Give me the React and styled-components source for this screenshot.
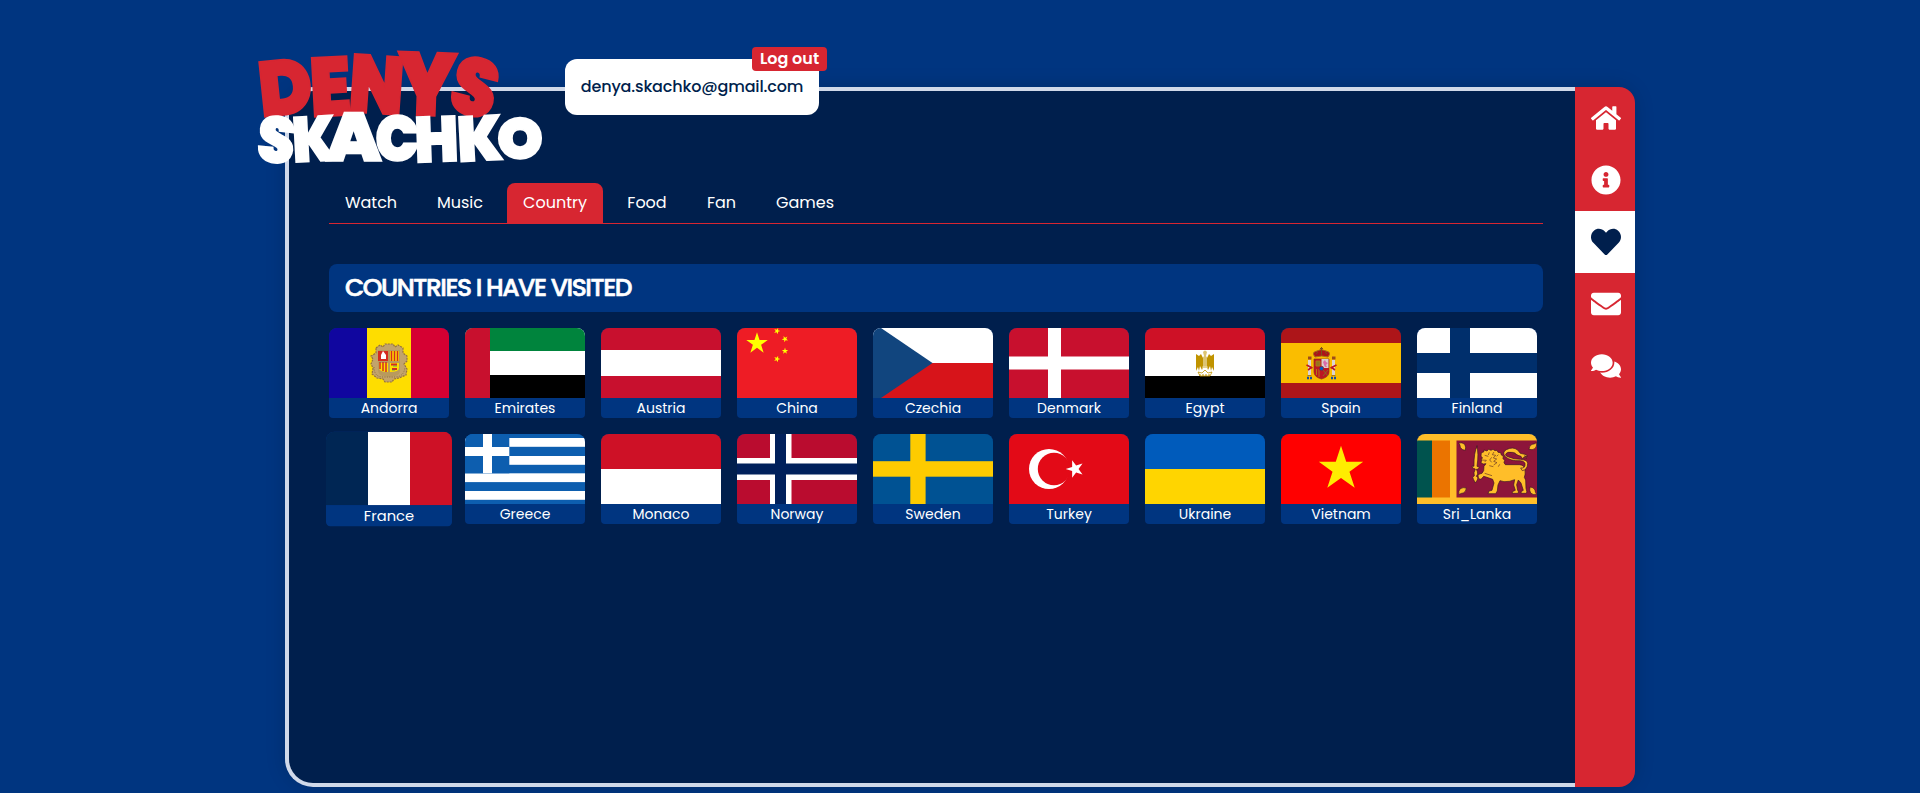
import React from 'react';
import styled, { createGlobalStyle, css } from 'styled-components';
import { FaHome, FaInfoCircle, FaHeart, FaEnvelope, FaComments } from 'react-icons/fa';

const color = {
  page: '#003580',
  panel: '#001f4d',
  red: '#d72631',
  border: '#d0d9ea',
};

const GlobalStyle = createGlobalStyle`
  * { box-sizing: border-box; }
  html, body { margin: 0; padding: 0; }
  body {
    background: ${color.page};
    color: #fff;
    font-family: Poppins, Inter, sans-serif;
    font-size: 16px;
    overflow: hidden;
  }
`;

const Page = styled.div`
  height: 793px;
  padding: 87px 285px 0;
`;

const Window = styled.div`
  position: relative;
  display: flex;
  width: 1350px;
  height: 700px;
  border-radius: 30px 20px 20px 30px;
  box-shadow: 0 0 20px rgba(0, 0, 0, 0.16);
`;

const Panel = styled.main`
  flex: 1;
  padding: 92px 32px 0 40px;
  background: ${color.panel};
  border: 4px solid ${color.border};
  border-right: 0;
  border-radius: 28px 0 0 28px;
`;

const Sidebar = styled.nav`
  width: 60px;
  background: ${color.red};
  border-radius: 0 16px 16px 0;
  overflow: hidden;
`;

const SideLink = styled.a`
  display: flex;
  align-items: center;
  justify-content: center;
  height: 62px;
  padding-left: 2px;
  color: ${(p) => (p.$active ? color.panel : '#fff')};
  background: ${(p) => (p.$active ? '#fff' : 'transparent')};
  svg { width: 30px; height: 30px; }
`;

const Logo = styled.svg`
  position: absolute;
  left: -45px;
  top: -57px;
  width: 320px;
  height: 150px;
  overflow: visible;
  font-family: Poppins, Lato, sans-serif;
  font-weight: 900;
`;

const Account = styled.div`
  position: absolute;
  left: 280px;
  top: -28px;
  display: flex;
  align-items: center;
  justify-content: center;
  width: 254px;
  height: 56px;
  padding-bottom: 1px;
  background: #fff;
  border-radius: 12px;
  color: ${color.panel};
  font-weight: 500;
  white-space: nowrap;
  letter-spacing: -0.15px;
`;

const LogOut = styled.button`
  position: absolute;
  right: -8px;
  top: -12px;
  width: 75px;
  height: 24px;
  padding: 0;
  border: 0;
  border-radius: 4px;
  background: ${color.red};
  color: #fff;
  font: 600 16px/24px Poppins, Inter, sans-serif;
`;

const Tabs = styled.div`
  display: flex;
  gap: 8px;
  height: 41px;
  border-bottom: 1px solid ${color.red};
`;

const Tab = styled.a`
  width: ${(p) => p.$width}px;
  height: 40px;
  line-height: 39px;
  text-align: center;
  border-radius: 8px 8px 0 0;
  ${(p) => p.$active && css`background: ${color.red};`}
`;

const Heading = styled.h1`
  height: 48px;
  margin: 40px 0 16px;
  padding: 0 16px;
  border-radius: 8px;
  background: ${color.page};
  font-size: 25px;
  line-height: 48px;
  font-weight: 500;
  -webkit-text-stroke: 0.6px #fff;
  letter-spacing: -1.46px;
  text-transform: uppercase;
`;

const Grid = styled.div`
  display: grid;
  grid-template-columns: repeat(9, 120px);
  gap: 16px;
`;

const Card = styled.figure`
  height: 90px;
  margin: 0;
  border-radius: 8px 8px 4px 4px;
  background: ${color.page};
  overflow: hidden;
  ${(p) => p.$hovered && css`transform: scale(1.05);`}
`;

const FlagArt = styled.svg`
  display: block;
  width: 120px;
  height: 70px;
`;

const CardName = styled.figcaption`
  height: 20px;
  line-height: 20px;
  text-align: center;
  font-size: 14px;
`;

const R = ({ x = 0, y = 0, w = 120, h = 70, f }) => <rect x={x} y={y} width={w} height={h} fill={f} />;

const Star = ({ x, y, r, f, turn = 0 }) => {
  const points = Array.from({ length: 10 }, (_, i) => {
    const a = ((i * 36 - 90 + turn) * Math.PI) / 180;
    const d = i % 2 ? r * 0.382 : r;
    return `${(x + d * Math.cos(a)).toFixed(2)},${(y + d * Math.sin(a)).toFixed(2)}`;
  }).join(' ');
  return <polygon points={points} fill={f} />;
};

const AndorraArms = () => (
  <g>
    <path d="M47 20l4-3 3 2 2-3h8l2 3 3-2 5 3v5l4 3v5l-3 3 3 5-1 6-7 3-5 1-2 3h-7l-2-3-6-1-5-4 1-6-2-4 2-5-2-3 5-3z" fill="#c2a36b" stroke="#94713f" strokeWidth="1.2" strokeDasharray="2 1" />
    <path d="M49 22h22v20q0 5-5 6l-6 1-6-1q-5-1-5-6z" fill="#b89a5d" />
    <path d="M49 23h10v10H49z" fill="#d52b1e" />
    <path d="M54 23l3 4v4h-5v-4z" fill="#fff" />
    <path d="M61 23h9v10h-9zM50 35h9v9q-9 0-9-4zM61 35h9v5q0 4-9 4z" fill="#fedd00" />
    <path d="M62.5 23v10M65.5 23v10M68.5 23v10M51 34v7M54 34v9M57 34v10" stroke="#d52b1e" strokeWidth="1.5" />
    <path d="M62 36.5h6M63 41h5" stroke="#d52b1e" strokeWidth="2.2" />
    <path d="M64 38h4M63 42h3" stroke="#2b8b76" strokeWidth=".7" />
    <path d="M45 39q0 10 9 10h12q9 0 10-10" fill="none" stroke="#8b6c3e" strokeWidth="1" strokeDasharray="1 1.4" />
  </g>
);

const EgyptEagle = () => (
  <g fill="#c09300">
    <path d="M58 24q2-3 4 0l-1 4 2 3-1 9h-4l-1-9 2-3z" opacity=".55" />
    <path d="M51 26l3 2 2-2 2 4v9l-1 3-2-4-1 5-1-4-2 4zM69 26l-3 2-2-2-2 4v9l1 3 2-4 1 5 1-4 2 4z" />
    <path d="M53 44l4 1 3-3 3 3 4-1-2 4H55z" fill="none" stroke="#c09300" strokeWidth=".8" />
    <path d="M57 39h6" stroke="#fff" strokeWidth=".5" />
    <path d="M54 47h12" stroke="#c09300" strokeWidth="1" strokeDasharray="2 1" />
  </g>
);

const SpainArms = () => (
  <g>
    <path d="M33 31h15v13q0 5-7.5 7-7.5-2-7.5-7z" fill="#bd1622" stroke="#8c331a" strokeWidth=".7" />
    <path d="M40.5 31h7v9h-7z" fill="#d8cfcb" />
    <path d="M42 34l2-2 1 2 2 1-2 2 1 2h-2l-1-2z" fill="#db6ba8" />
    <path d="M35 33h4v5h-4zM35.5 41v6M38 41v8" fill="#96731f" stroke="#ad7b12" />
    <path d="M42 42l5 6M47 42l-5 6" stroke="#7c7927" strokeWidth=".8" />
    <circle cx="40.5" cy="40.5" r="2.2" fill="#005bbf" stroke="#ad1519" strokeWidth=".8" />
    <path d="M34 29q-4-5 2-6 4-3 9 0 6 1 2 6-6-2-13 0z" fill="#ad1519" stroke="#a66d1b" />
    <path d="M40.5 19v8M39 20.5h3M35 26l2-2M46 26l-2-2" stroke="#7b511d" strokeWidth="1" />
    <path d="M28.5 32v15M52.5 32v15" stroke="#ddd4ce" strokeWidth="3" />
    <path d="M27 30h3.5M51 30h3.5" stroke="#9d4c1b" strokeWidth="3" />
    <path d="M25.5 37l6 3M27 42l4-3M49.5 40l6-3M50 39l4 3" stroke="#bb1724" strokeWidth="1.6" />
    <path d="M26 50h5M50 50h5" stroke="#174ea0" strokeWidth="2.5" strokeDasharray="2 1" />
    <path d="M26.5 47.5h4M50.5 47.5h4" stroke="#ad7b12" />
  </g>
);

const SriLankaLion = () => (
  <g transform="translate(-12 -9) scale(.3333)">
    <g fill="#ffbe29" stroke="#3b1425" strokeWidth="2" strokeLinejoin="round">
      <path d="M215 62q7 22 1 62l7 3-3 5-6 1q4 5 4 14l-4 7 5 4-2 7-6 9-5-10-3-7 5-4-1-10 4-11-8-3-2-6 6 1q-1-41 10-62z" />
      <path d="M230 105l-2-4 5-2-5-5 1-11 7-2 1-6 9 3 5-5 7 3 6-3 6 4 6-1 3 6 8 1 2 7 6 4-1 7 5 5-2 7 4 6h42q16 1 17 15 2 15-2 23l4 8 1 25 3 12-4 3h-13l-1-5 7-4-7-22-8-9-5 14 3 17 3 5-3 4h-16v-5l9-4-5-16 3-16q-15 7-32 6l-12-3-6 13-2 18-5 8h-23l3-8 9-2 6-22-4-11-20-7-7-2-8 9-7-2-2-9 4-5 8-2 5-8 1-13 6-8-8 1-7-3z" />
      <path d="M347 129q15 2 13-14-3-8-15-8-27 2-44-12-11-13 3-21 20-10 34 1l8 10 18 4 3 5-9-1 7 6-9-2-3 5-5-8-9-3q-14-13-30-9-16 8 2 14 15 7 36 7 21 2 21 12 0 19-16 22z" />
      {[[162, 54, 0], [394, 54, 90], [162, 208, 270], [394, 208, 180]].map(([x, y, a]) => (
        <path key={a} d="M-1 0q11-3 18 4 5 8 2 18-10 0-15-9 0-7-5-13z" transform={`translate(${x} ${y}) rotate(${a})`} />
      ))}
    </g>
    <path d="M239 91l11 3M230 105l14 1-5 5M253 82l-3 8M267 81l-5 8 10 2-7 8 10 3-9 7 10 4-10 7M253 122l12 3M239 145l22 7M284 118l-4 7M322 91l7-8 5 7M260 97l-6 8 6 7M280 89l-5 5" fill="none" stroke="#653425" strokeWidth="2" />
  </g>
);

const FLAGS = {
  Andorra: <><R f="#10069f" /><R x={38} w={44} f="#fedd00" /><R x={82} w={38} f="#d50032" /><AndorraArms /></>,
  Emirates: <><R f="#fff" /><R h={23} f="#00843d" /><R y={47} h={23} f="#000" /><R w={25} f="#c8102e" /></>,
  Austria: <><R f="#c8102e" /><R y={22} h={26} f="#fff" /></>,
  China: (
    <>
      <R f="#ee1c25" />
      <Star x={20} y={15.5} r={11.3} f="#ff0" />
      <Star x={40} y={3} r={3.4} f="#ff0" turn={20} />
      <Star x={48} y={11} r={3.4} f="#ff0" turn={45} />
      <Star x={48} y={23} r={3.4} f="#ff0" />
      <Star x={40} y={31} r={3.4} f="#ff0" turn={20} />
    </>
  ),
  Czechia: <><R h={35} f="#fff" /><R y={35} h={35} f="#d7141a" /><path d="M0 0h8l51.5 35L8 70H0z" fill="#11457e" /></>,
  Denmark: <><R f="#c8102e" /><R x={39} w={13} f="#fff" /><R y={28.5} h={13} f="#fff" /></>,
  Egypt: <><R h={22} f="#ce1126" /><R y={22} h={26} f="#fff" /><R y={48} h={22} f="#000" /><EgyptEagle /></>,
  Spain: <><R f="#ad1519" /><R y={15} h={40} f="#fabd00" /><SpainArms /></>,
  Finland: <><R f="#fff" /><R x={33} w={20} f="#002f6c" /><R y={25} h={20} f="#002f6c" /></>,
  France: <><R f="#002654" /><R x={40} w={40} f="#fff" /><R x={80} w={40} f="#ce1126" /></>,
  Greece: (
    <>
      <R f="#0d5eaf" />
      {[4, 22, 39.3, 57].map((y) => <R key={y} y={y} h={8.8} f="#fff" />)}
      <R w={44.3} h={39.3} f="#0d5eaf" />
      <R x={18} w={9} h={39.3} f="#fff" />
      <R y={13} w={44.3} h={9} f="#fff" />
    </>
  ),
  Monaco: <><R h={35} f="#ce1126" /><R y={35} h={35} f="#fff" /></>,
  Norway: (
    <>
      <R f="#ba0c2f" />
      <R x={33} w={21.5} f="#fff" /><R y={24} h={22} f="#fff" />
      <R x={38} w={11} f="#00205b" /><R y={29.5} h={11} f="#00205b" />
    </>
  ),
  Sweden: <><R f="#005293" /><R x={37.3} w={15.3} f="#fecb00" /><R y={27.2} h={15.5} f="#fecb00" /></>,
  Turkey: (
    <>
      <R f="#e30a17" />
      <circle cx="40" cy="35" r="20" fill="#fff" />
      <circle cx="45" cy="35" r="16.2" fill="#e30a17" />
      <Star x={66} y={35} r={9.3} f="#fff" turn={-90} />
    </>
  ),
  Ukraine: <><R h={35} f="#005bbb" /><R y={35} h={35} f="#ffd500" /></>,
  Vietnam: <><R f="#f00" /><Star x={60} y={35} r={23.3} f="#ffec00" /></>,
  Sri_Lanka: (
    <>
      <R f="#ffbe29" />
      <R y={6.5} w={15} h={57} f="#00534e" />
      <R x={15} y={6.5} w={18} h={57} f="#eb7400" />
      <R x={39.5} y={6.5} w={80.5} h={57} f="#8d153a" />
      <SriLankaLion />
    </>
  ),
};

/* char, centre x, baseline y, rotation, font size, advance width */
const FIRST_NAME = [
  ['D', 144, 253, -6, 234, 162],
  ['E', 275, 258, -3, 250, 124],
  ['N', 404, 250, 4, 246, 166],
  ['Y', 557, 257, 2, 268, 180],
  ['S', 684, 255, 14, 244, 138],
];
const LAST_NAME = [
  ['S', 102, 397, 6, 194, 112],
  ['K', 225, 393, -3, 190, 130],
  ['A', 341, 392, 0, 204, 166],
  ['C', 472, 392, 0, 186, 132],
  ['H', 592, 395, -2, 192, 132],
  ['K', 723, 392, -3, 190, 136],
  ['O', 840, 386, 0, 174, 138],
];

const LogoWord = ({ letters, fill }) => (
  <g fill={fill} stroke={fill} strokeWidth="5" strokeLinejoin="miter">
    {letters.map(([c, x, y, turn, size, width], i) => (
      <text
        key={i}
        x={-width / 2}
        fontSize={size}
        textLength={width}
        lengthAdjust="spacingAndGlyphs"
        transform={`translate(${x} ${y}) rotate(${turn})`}
      >
        {c}
      </text>
    ))}
  </g>
);

const TABS = [
  { name: 'Watch', width: 84 },
  { name: 'Music', width: 78 },
  { name: 'Country', width: 96 },
  { name: 'Food', width: 72 },
  { name: 'Fan', width: 61 },
  { name: 'Games', width: 90 },
];

const LINKS = [FaHome, FaInfoCircle, FaHeart, FaEnvelope, FaComments];

export default function App() {
  return (
    <Page>
      <GlobalStyle />
      <Window>
        <Panel>
          <Tabs>
            {TABS.map((t) => (
              <Tab key={t.name} $width={t.width} $active={t.name === 'Country'}>{t.name}</Tab>
            ))}
          </Tabs>
          <Heading>Countries I have visited</Heading>
          <Grid>
            {Object.entries(FLAGS).map(([name, art]) => (
              <Card key={name} $hovered={name === 'France'}>
                <FlagArt viewBox="0 0 120 70">{art}</FlagArt>
                <CardName>{name}</CardName>
              </Card>
            ))}
          </Grid>
        </Panel>
        <Sidebar>
          {LINKS.map((Icon, i) => (
            <SideLink key={i} $active={i === 2}><Icon /></SideLink>
          ))}
        </Sidebar>
        <Logo viewBox="0 0 960 450">
          <LogoWord letters={FIRST_NAME} fill={color.red} />
          <LogoWord letters={LAST_NAME} fill="#fff" />
        </Logo>
        <Account>
          denya.skachko@gmail.com
          <LogOut>Log out</LogOut>
        </Account>
      </Window>
    </Page>
  );
}
